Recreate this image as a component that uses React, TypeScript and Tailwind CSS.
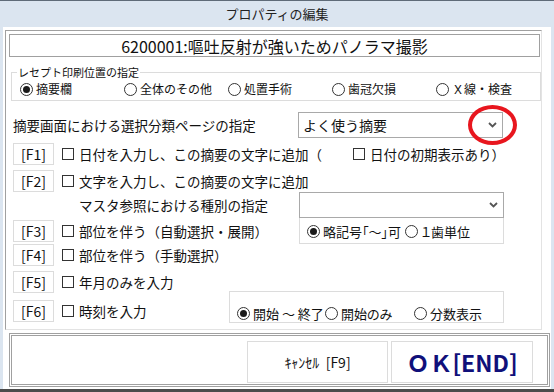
import React from 'react';

function Radio({ checked, label, className }: { checked?: boolean; label: string; className?: string }) {
  return (
    <div className={`flex items-center gap-[3px] ${className ?? ''}`}>
      <span className="w-[13px] h-[13px] rounded-full border border-[#333] bg-white flex items-center justify-center shrink-0">
        {checked && <span className="w-[7px] h-[7px] rounded-full bg-[#1a1a1a]" />}
      </span>
      <span className="whitespace-nowrap leading-none">{label}</span>
    </div>
  );
}

function Check() {
  return <span className="w-[12px] h-[12px] border border-[#333] bg-white shrink-0" />;
}

function FKey({ k }: { k: string }) {
  return (
    <div className="w-[41px] h-[22px] border border-[#dcdcdc] bg-white flex items-center justify-center text-[14px] leading-none shrink-0">
      [{k}]
    </div>
  );
}

function Chevron() {
  return (
    <svg width="9" height="6" viewBox="0 0 9 6" className="shrink-0">
      <polyline points="1,1 4.5,4.5 8,1" fill="none" stroke="#555" strokeWidth="1.8" />
    </svg>
  );
}

function CheckRow({ k, label, children }: { k: string; label: string; children?: React.ReactNode }) {
  return (
    <div className="flex items-center pl-[7px]">
      <FKey k={k} />
      <div className="ml-[8px] flex items-center">
        <Check />
        <span className="ml-[5px] whitespace-nowrap">{label}</span>
      </div>
      {children}
    </div>
  );
}

export default function App() {
  return (
    <div className="w-[554px] h-[392px] flex flex-col bg-[#dbe5f0] border-t border-[#5f6b78] font-['Noto_Sans_CJK_JP',sans-serif] text-[#111] overflow-hidden">
      <div className="h-[26px] flex items-center justify-center text-[13px] text-[#222]">プロパティの編集</div>

      <div className="flex-1 ml-[3px] mr-[3px] bg-white flex flex-col">
        {/* main panel */}
        <div className="mt-[3px] ml-[2px] w-[537px] h-[300px] border border-t-[#a0a0a0] border-l-[#a0a0a0] border-r-[#e3e3e3] border-b-[#e3e3e3] flex flex-col text-[13.5px]">
          <div className="mt-[3px] ml-[3px] w-[531px] h-[23px] border border-[#a0a0a0] flex items-center justify-center text-[16px] leading-none">
            6200001:嘔吐反射が強いためパノラマ撮影
          </div>

          <fieldset className="mt-[9px] ml-[5px] w-[528px] border border-[#dcdcdc] pl-[8px] pb-[2px]">
            <legend className="ml-[-3px] px-px text-[11px] leading-[13px]">レセプト印刷位置の指定</legend>
            <div className="flex h-[19px] items-center pt-px text-[12px]">
              <Radio checked label="摘要欄" className="w-[104px]" />
              <Radio label="全体のその他" className="w-[104px]" />
              <Radio label="処置手術" className="w-[104px]" />
              <Radio label="歯冠欠損" className="w-[104px]" />
              <Radio label="Ｘ線・検査" className="w-[104px]" />
            </div>
          </fieldset>

          <div className="mt-[11px] flex items-center h-[26px]">
            <div className="w-[292px] pl-[7px] whitespace-nowrap">摘要画面における選択分類ページの指定</div>
            <div className="relative w-[205px] h-[26px] border border-[#a9a9a9] flex items-center justify-between pl-[4px] pr-[5px] text-[14px]">
              <span>よく使う摘要</span>
              <Chevron />
              <div className="absolute left-[169px] top-[-8px] w-[49px] h-[40px] rounded-[50%] border-[4px] border-[#e8161e]" />
            </div>
          </div>

          <div className="mt-[5px] h-[22px]">
            <CheckRow k="F1" label="日付を入力し、この摘要の文字に追加（">
              <div className="ml-auto mr-[36px] flex items-center">
                <Check />
                <span className="ml-[5px] whitespace-nowrap">日付の初期表示あり）</span>
              </div>
            </CheckRow>
          </div>

          <div className="mt-[5px] h-[22px]">
            <CheckRow k="F2" label="文字を入力し、この摘要の文字に追加" />
          </div>

          <div className="flex h-[26px]">
            <div className="w-[293px] pl-[73px] pt-[7px] leading-none whitespace-nowrap">マスタ参照における種別の指定</div>
            <div className="w-[205px] h-[26px] border border-[#a9a9a9] flex items-center justify-end pr-[5px]">
              <Chevron />
            </div>
          </div>

          <div className="flex h-[26px] items-center">
            <div className="w-[293px]">
              <CheckRow k="F3" label="部位を伴う（自動選択・展開）" />
            </div>
            <div className="w-[205px] h-[26px] border border-t-0 border-[#dcdcdc] flex items-center pl-[7px] pt-[2px] text-[13px] [font-feature-settings:'palt']">
              <Radio checked label="略記号「～」可" className="w-[98px]" />
              <Radio label="１歯単位" />
            </div>
          </div>

          <div className="h-[22px]">
            <CheckRow k="F4" label="部位を伴う（手動選択）" />
          </div>

          <div className="mt-[5px] h-[22px]">
            <CheckRow k="F5" label="年月のみを入力" />
          </div>

          <div className="mt-[-2px] flex h-[32px] items-end">
            <div className="w-[223px] pb-[1px]">
              <CheckRow k="F6" label="時刻を入力" />
            </div>
            <div className="w-[275px] h-[32px] border border-[#dcdcdc] flex items-end pl-[7px] pb-[1px] text-[13px] [font-feature-settings:'palt']">
              <div className="flex h-[16px] items-center">
                <Radio checked label="開始 ～ 終了" className="w-[88px]" />
                <Radio label="開始のみ" className="w-[89px]" />
                <Radio label="分数表示" />
              </div>
            </div>
          </div>
        </div>

        {/* button panel */}
        <div className="mt-[3px] ml-[6px] w-[541px] h-[54px] border-[3px] border-double border-[#a0a0a0] flex justify-end items-start pt-[5px] pr-[14px] gap-[3px]">
          <div className="w-[141px] h-[42px] border border-[#dcdcdc] flex items-center justify-center text-[14px] whitespace-nowrap">
            ｷｬﾝｾﾙ&nbsp;&nbsp;[F9]
          </div>
          <div className="w-[142px] h-[42px] border border-[#dcdcdc] flex items-center justify-center text-[23px] font-bold text-[#10107a] whitespace-nowrap">
            ＯＫ[END]
          </div>
        </div>
      </div>

      <div className="h-[3px] bg-[#4b4b4b]" />
    </div>
  );
}
